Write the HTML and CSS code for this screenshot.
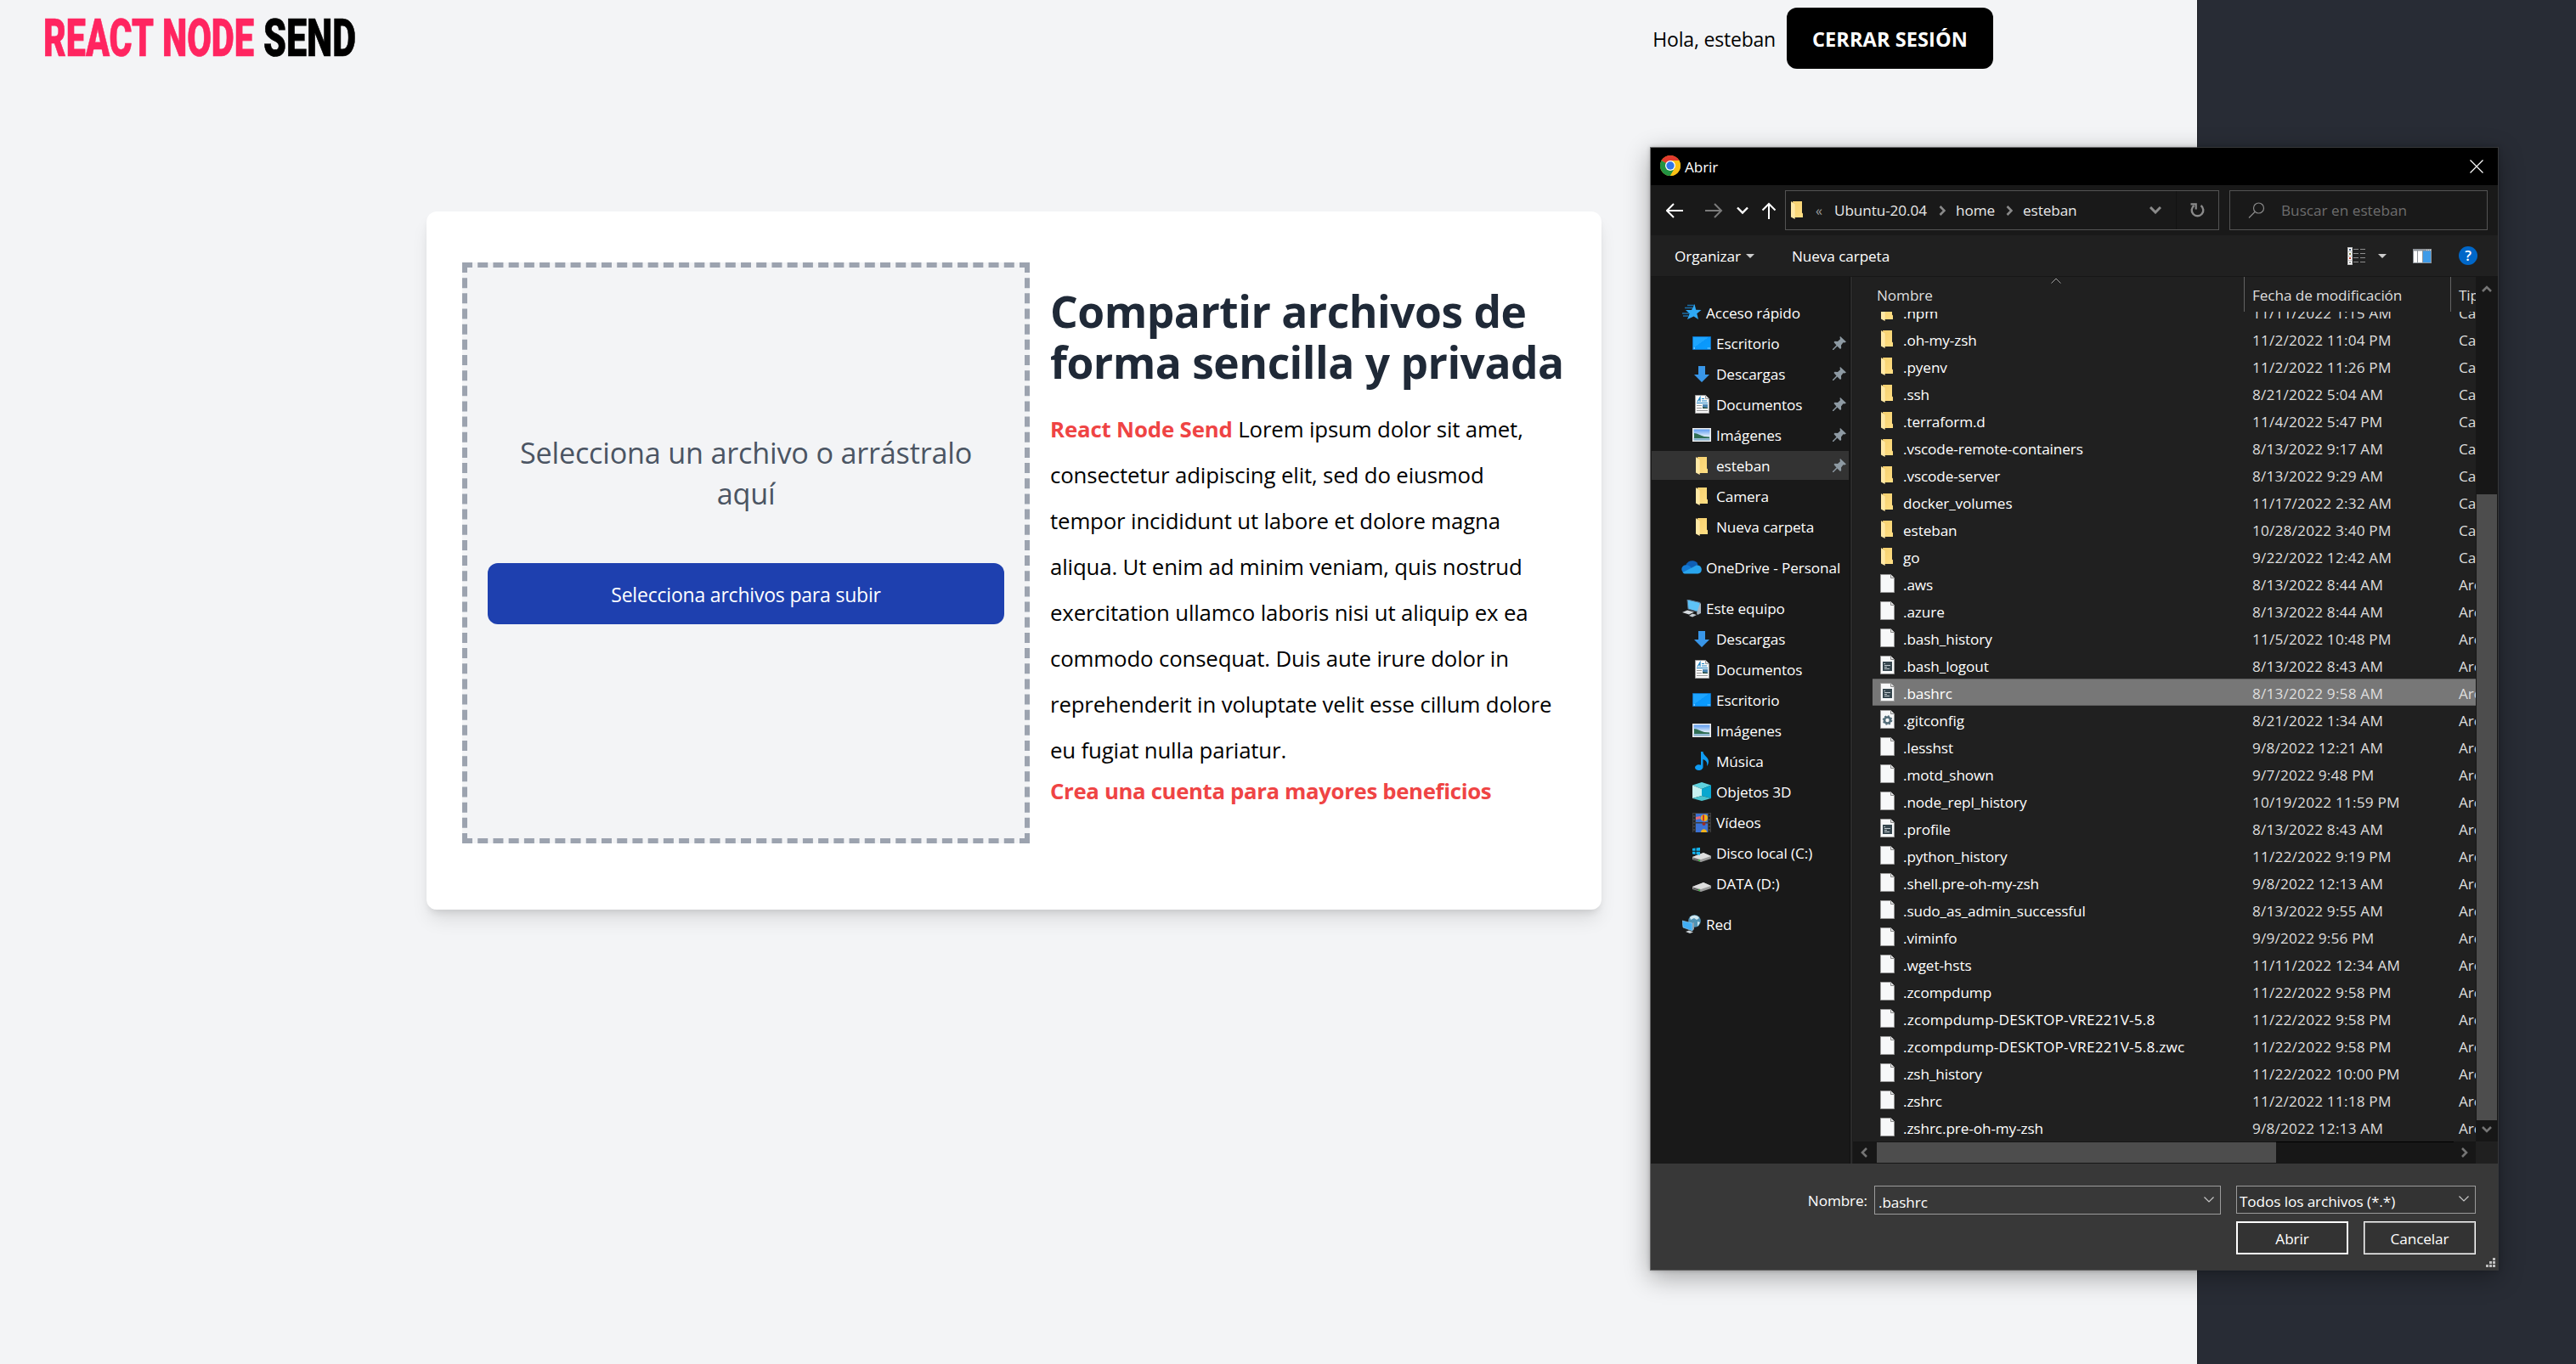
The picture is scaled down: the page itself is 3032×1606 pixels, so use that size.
FILE: index.html
```html
<!DOCTYPE html>
<html lang="es">
<head>
<meta charset="utf-8">
<title>React Node Send</title>
<link rel="stylesheet" href="styles.css">
</head>
<body>
<svg class="defs" aria-hidden="true">
  <defs>
    <linearGradient id="gFolder" x1="0" y1="0" x2="1" y2="1"><stop offset="0" stop-color="#f5cf6d"/><stop offset="1" stop-color="#ffdf85"/></linearGradient>
    <linearGradient id="gDesk" x1="0" y1="0" x2="1" y2="1"><stop offset="0.45" stop-color="#1ea5ff"/><stop offset="0.46" stop-color="#0a97fb"/><stop offset="1" stop-color="#0a9dff"/></linearGradient>
    <linearGradient id="gSky" x1="0" y1="0" x2="0" y2="1"><stop offset="0" stop-color="#4f93ee"/><stop offset="0.6" stop-color="#dbeafa"/><stop offset="1" stop-color="#5d95b8"/></linearGradient>
  </defs>
  <symbol id="folder" viewBox="0 0 14 21"><path d="M2 0h11v13.5l1 1V19H4z" fill="url(#gFolder)"/><path d="M0 0l4.7 3.4V21L0 18.5z" fill="#ffe9a6"/></symbol>
  <symbol id="file" viewBox="0 0 17 22"><path d="M.5.5h12l4 4v17H.5z" fill="#f7f8f9" stroke="#9a9a9a"/><path d="M12.5.5v4h4" fill="#e4e4e4" stroke="#8a8a8a"/></symbol>
  <symbol id="script" viewBox="0 0 17 22"><use href="#file"/><path d="M3 7h11v11H3z" fill="#37474f"/><path d="M4.500 9.500h1.500M5 11.500h7M5 13.500h3M5 15.500h6" stroke="#c3cbd0"/></symbol>
  <symbol id="config" viewBox="0 0 17 22"><use href="#file"/><circle cx="8.500" cy="12" r="3.500" fill="none" stroke="#546e7a" stroke-width="2.600"/><circle cx="8.500" cy="12" r="5" fill="none" stroke="#546e7a" stroke-width="1.600" stroke-dasharray="1.960 1.960"/></symbol>
  <symbol id="star" viewBox="0 0 24 24"><path d="M15.500 2l1.700 6.800 6.300.2-5.200 4.300 1.700 6.700-5.400-3.500L7 20l2.600-6.700L5 9h7z" fill="#2fa9f5"/><path d="M7 3.500h8M4 6.500h9M1 13h8M2 16h6" stroke="#1b6da6" stroke-width="1.300"/></symbol>
  <symbol id="desktop" viewBox="0 0 22 16"><path d="M.5.5h21v15H.5z" fill="url(#gDesk)" stroke="#0e6fbd"/><path d="M1.500 14h1.500M18 14h1M20 14h1" stroke="#e9f5ff"/></symbol>
  <symbol id="download" viewBox="0 0 18 19"><path d="M5 0h8v10h5l-9 9-9-9h5z" fill="#3996e8"/></symbol>
  <symbol id="document" viewBox="0 0 17 22"><path d="M.5.500h12l4 4v17H.5z" fill="#fafafa" stroke="#9a9a9a"/><path d="M12.500.5v4h4" fill="#ddd" stroke="#999"/><path d="M3 8l3-5v5M8 4.500h3M8 7h6M2 9.500h13" stroke="#1c84c6" stroke-width="1.200" fill="none"/><path d="M2 12.500h6M2 15.500h6M2 18.500h13" stroke="#9a9a9a"/><path d="M9 11h6v5H9z" fill="#4b86b4"/><path d="M9 14l6 1v1H9z" fill="#2e5346"/></symbol>
  <symbol id="picture" viewBox="0 0 22 16"><path d="M.75.75h20.500v14.500H.75z" fill="url(#gSky)" stroke="#efefef" stroke-width="1.500"/><path d="M2 6c4 0 8 3 12 4l6 .500V12H2z" fill="#2f6e53"/></symbol>
  <symbol id="cloud" viewBox="0 0 24 16"><path d="M5 5.500C7 1 11-.5 15 .5c3 .8 4 2.500 4.500 4.700L12 9z" fill="#0f5fb5"/><path d="M2 14C-1 11 0 6 5 5.300c3-.5 5 1 7 3.200L8 14z" fill="#1379d3"/><path d="M15 7c3-3 8-1.500 8.600 2.300C24.500 13 22 15.500 19.500 15.500H5c-2 0-3-.7-3.500-1.500z" fill="#29a5ee"/></symbol>
  <symbol id="computer" viewBox="0 0 24 21"><path d="M7 0l15 3.500V15L8 11z" fill="#5ec3f7" stroke="#5b7790"/><path d="M22 4l1 1v11l-4 2-1-2z" fill="#a9b6c2"/><path d="M1 15l6-2.500 8 2-6 3z" fill="#d5dade"/><path d="M9 19l4-2.500 5 1.500-5 2.500z" fill="#c3cad0"/></symbol>
  <symbol id="music" viewBox="0 0 17 23"><path d="M7 0h2.500c0 4 6 6 6.500 11 .2 2-.6 4.500-2 6 1-5-1.500-7-4.500-8v9c0 2.500-2.500 4-5 4S0 20.600 0 18.800s2-3.600 4.500-3.600c1 0 1.900.2 2.500.6z" fill="#0f9cf3"/></symbol>
  <symbol id="cube" viewBox="0 0 22 22"><path d="M0 3.500L11 0l11 3.500L11 8z" fill="#5fd3df"/><path d="M0 3.500L11 8v8L0 19z" fill="#c8f1f0"/><path d="M22 3.500L11 8v8l11 3z" fill="#0aa7cf"/><path d="M0 19l11-3 11 3-11 3z" fill="#49c3cf"/></symbol>
  <symbol id="video" viewBox="0 0 22 23"><path d="M0 0h22v23H0z" fill="#3d3d3d"/><path d="M2 1v22M20 1v22" stroke="#1c1c1c" stroke-width="1.600" stroke-dasharray="2 2"/><path d="M4 1h14v10H4zM4 12.500h14V23H4z" fill="#3c72d4"/><circle cx="14" cy="6" r="4" fill="#f0b21c"/><path d="M12 2.500h2v7h-2z" fill="#c9342c"/><path d="M4 5l5-1 1 3-6 1z" fill="#e46b77"/><circle cx="13.500" cy="13" r="2" fill="#9c2c26"/><path d="M10 23c0-5 7-5 7 0z" fill="#f0b21c"/></symbol>
  <symbol id="disk" viewBox="0 0 22 12"><path d="M0 6l13-5 9 4v3l-12 4-10-3z" fill="#9c9c9c"/><path d="M0 6l13-5 9 4-12 4z" fill="#dedede"/><path d="M1 8l8 2.500" stroke="#444" stroke-width="1.300"/><path d="M7 10h2" stroke="#38c638" stroke-width="1.500"/></symbol>
  <symbol id="sysdisk" viewBox="0 0 22 17"><use href="#disk" y="5" width="22" height="12"/><path d="M0 1l3.500-.5v3.300H0zM4.500.4L9-.2v4H4.500zM0 4.800h3.500V8L0 7.500zM4.500 4.800H9v4L4.500 8z" fill="#12b3ee"/></symbol>
  <symbol id="network" viewBox="0 0 22 22"><circle cx="14.500" cy="7.500" r="7.300" fill="#4f93b5"/><path d="M9 3c3-3 9-3 11 1l-3 2-3-2-4 2zM18 8l3 1-3 5z" fill="#cfe7f0"/><path d="M0 7l12 3v9L1 15z" fill="#41aef3" stroke="#9fd3f2" stroke-width=".6"/><path d="M12 10l2-1v8l-2 2z" fill="#8ea2b0"/><path d="M4 20l4-1.500 5 2-4 1.500z" fill="#cbd2d6"/></symbol>
  <symbol id="pin" viewBox="0 0 16 16"><path d="M9 0l7 6.500-2 1-1.500-.2L10 10.500l.2 3.500-1.200 1L5.500 11.500 1 16H0v-1l4.500-4.500L1.500 7l1-1.200 3.500.2L9 3.300 8.500 1z" fill="#8e9aa3"/></symbol>
</svg>

<div class="screen">
  <main class="page">
    <header class="topbar">
      <svg class="logo" width="368" height="50" viewBox="0 0 368 50" role="img">
        <text class="logo-accent" x="-1" y="47" textLength="130" lengthAdjust="spacingAndGlyphs">REACT</text>
        <text class="logo-accent" x="139" y="47" textLength="108" lengthAdjust="spacingAndGlyphs">NODE</text>
        <text class="logo-dark" x="258" y="47" textLength="109" lengthAdjust="spacingAndGlyphs">SEND</text>
      </svg>
      <div class="session">
        <span class="hello">Hola, esteban</span>
        <button class="logout">CERRAR SESIÓN</button>
      </div>
    </header>
    <section class="card">
      <div class="dropzone">
        <p class="drop-text">Selecciona un archivo o arrástralo<br>aquí</p>
        <button class="upload">Selecciona archivos para subir</button>
      </div>
      <div class="info">
        <h1>Compartir archivos de<br>forma sencilla y privada</h1>
        <p class="lead"><b>React Node Send</b> Lorem ipsum dolor sit amet,<br>consectetur adipiscing elit, sed do eiusmod<br>tempor incididunt ut labore et dolore magna<br>aliqua. Ut enim ad minim veniam, quis nostrud<br>exercitation ullamco laboris nisi ut aliquip ex ea<br>commodo consequat. Duis aute irure dolor in<br>reprehenderit in voluptate velit esse cillum dolore<br>eu fugiat nulla pariatur.</p>
        <a class="signup">Crea una cuenta para mayores beneficios</a>
      </div>
    </section>
  </main>

  <div class="dialog" role="dialog">
    <div class="titlebar">
      <svg class="chrome" width="24" height="24" viewBox="0 0 24 24"><circle cx="12" cy="12" r="12" fill="#fbc116"/><path d="M12 12L1.600 6A12 12 0 0 1 22.400 6z" fill="#e33b2e"/><path d="M12 12L1.600 6A12 12 0 0 0 12 24l5.200-9z" fill="#229342"/><path d="M12 6h10.400A12 12 0 0 1 12 24l5.200-9z" fill="#fbc116"/><circle cx="12" cy="12" r="6" fill="#fff"/><circle cx="12" cy="12" r="4.700" fill="#2f74e8"/></svg>
      <span class="title">Abrir</span>
      <svg class="close" width="16" height="16" viewBox="0 0 16 16"><path d="M.5.500l15 15M15.500.5l-15 15" stroke="#fff" stroke-width="1.200"/></svg>
    </div>

    <div class="navbar">
      <svg class="arrows" width="131" height="20" viewBox="0 0 131 20" fill="none" stroke="#fff" stroke-width="2"><path d="M1 10h19M9 2l-8 8 8 8"/><path d="M46 10h19M57 2l8 8-8 8" stroke="#7b7b7b"/><path d="M84 6.500l6 6 6-6" stroke-width="2.400"/><path d="M121 20V2M113.500 9.500L121 2l7.500 7.500"/></svg>
      <div class="address">
        <svg class="addr-folder" width="14" height="21"><use href="#folder"/></svg>
        <span class="laquo">«</span>
        <span class="crumb c1">Ubuntu-20.04</span>
        <svg class="sep" width="8" height="12" viewBox="0 0 8 12"><path d="M1.500 1l5 5-5 5" fill="none" stroke="#8a8a8a" stroke-width="2.600"/></svg>
        <span class="crumb c2">home</span>
        <svg class="sep" width="8" height="12" viewBox="0 0 8 12"><path d="M1.500 1l5 5-5 5" fill="none" stroke="#8a8a8a" stroke-width="2.600"/></svg>
        <span class="crumb c3">esteban</span>
        <svg class="addr-down" width="14" height="9" viewBox="0 0 14 9"><path d="M1 1l6 6 6-6" fill="none" stroke="#8a8a8a" stroke-width="3"/></svg>
        <div class="refresh"><svg width="17" height="17" viewBox="0 0 17 17"><path d="M4.500 3A6.800 6.800 0 1 0 12.500 3" fill="none" stroke="#8a8a8a" stroke-width="2.400"/><path d="M.5 1.300h6.200v6.200" fill="none" stroke="#8a8a8a" stroke-width="2.200"/></svg></div>
      </div>
      <div class="search">
        <svg width="20" height="20" viewBox="0 0 20 20"><circle cx="12.500" cy="7" r="6" fill="none" stroke="#8a8a8a" stroke-width="1.200"/><path d="M8 11.500L1 18.500" stroke="#8a8a8a" stroke-width="1.300"/></svg>
        <span>Buscar en esteban</span>
      </div>
    </div>

    <div class="toolbar">
      <span class="organize">Organizar</span>
      <i class="tri"></i>
      <span class="newfolder">Nueva carpeta</span>
      <svg class="views" width="22" height="21" viewBox="0 0 22 21"><path d="M0 0h6v21H0z" fill="#bdbdbd"/><path d="M1 1h4v4H1zM1 6h4v4H1zM1 11h4v4H1zM1 16h4v4H1z" fill="#fff"/><path d="M2 2h2v2H2z" fill="#3c5a78"/><path d="M2 7h2v2H2z" fill="#7a7a3c"/><path d="M2 12h2v2H2z" fill="#c23a2a"/><path d="M2 17h2v2H2z" fill="#999"/><path d="M7 2.500h6M15 2.500h6M7 7.500h6M15 7.500h6M7 12.500h6M15 12.500h6M7 17.500h6M15 17.500h6" stroke="#8d8d8d"/></svg>
      <i class="tri tri2"></i>
      <svg class="preview" width="22" height="17" viewBox="0 0 22 17"><path d="M0 0h22v17H0z" fill="#8f959b"/><path d="M1 2.500h4v13.500H1zM6 2.500h5v13.500H6z" fill="#fff"/><path d="M12 2.500h9v13.500h-9z" fill="#3f9be8"/><path d="M16 1.500h5" stroke="#ddd" stroke-dasharray="1 1"/></svg>
      <span class="help">?</span>
    </div>

    <div class="body">
      <nav class="tree">
        <div class="node top"><span class="ic"><svg width="24" height="24"><use href="#star"/></svg></span>Acceso rápido</div>
        <div class="node"><span class="ic"><svg width="22" height="16"><use href="#desktop"/></svg></span>Escritorio<svg class="pin" width="16" height="16"><use href="#pin"/></svg></div>
        <div class="node"><span class="ic"><svg width="18" height="19"><use href="#download"/></svg></span>Descargas<svg class="pin" width="16" height="16"><use href="#pin"/></svg></div>
        <div class="node"><span class="ic"><svg width="17" height="22"><use href="#document"/></svg></span>Documentos<svg class="pin" width="16" height="16"><use href="#pin"/></svg></div>
        <div class="node"><span class="ic"><svg width="22" height="16"><use href="#picture"/></svg></span>Imágenes<svg class="pin" width="16" height="16"><use href="#pin"/></svg></div>
        <div class="node current"><span class="ic"><svg width="14" height="21"><use href="#folder"/></svg></span>esteban<svg class="pin" width="16" height="16"><use href="#pin"/></svg></div>
        <div class="node"><span class="ic"><svg width="14" height="21"><use href="#folder"/></svg></span>Camera</div>
        <div class="node"><span class="ic"><svg width="14" height="21"><use href="#folder"/></svg></span>Nueva carpeta</div>
        <div class="node top gap"><span class="ic"><svg width="24" height="16"><use href="#cloud"/></svg></span>OneDrive - Personal</div>
        <div class="node top gap"><span class="ic"><svg width="24" height="21"><use href="#computer"/></svg></span>Este equipo</div>
        <div class="node"><span class="ic"><svg width="18" height="19"><use href="#download"/></svg></span>Descargas</div>
        <div class="node"><span class="ic"><svg width="17" height="22"><use href="#document"/></svg></span>Documentos</div>
        <div class="node"><span class="ic"><svg width="22" height="16"><use href="#desktop"/></svg></span>Escritorio</div>
        <div class="node"><span class="ic"><svg width="22" height="16"><use href="#picture"/></svg></span>Imágenes</div>
        <div class="node"><span class="ic"><svg width="17" height="23"><use href="#music"/></svg></span>Música</div>
        <div class="node"><span class="ic"><svg width="22" height="22"><use href="#cube"/></svg></span>Objetos 3D</div>
        <div class="node"><span class="ic"><svg width="22" height="23"><use href="#video"/></svg></span>Vídeos</div>
        <div class="node"><span class="ic low"><svg width="22" height="17"><use href="#sysdisk"/></svg></span>Disco local (C:)</div>
        <div class="node"><span class="ic low2"><svg width="22" height="12"><use href="#disk"/></svg></span>DATA (D:)</div>
        <div class="node top gap"><span class="ic"><svg width="22" height="22"><use href="#network"/></svg></span>Red</div>
      </nav>
      <div class="divider"></div>
      <div class="list">
        <div class="pane">
          <div class="heads">
            <span class="h-name">Nombre</span><span class="h-date">Fecha de modificación</span><span class="h-type">Tipo</span>
            <svg class="sort" width="12" height="7" viewBox="0 0 12 7"><path d="M.5 6.500L6 1l5.500 5.500" fill="none" stroke="#a0a0a0"/></svg>
          </div>
          <div class="rows">
            <div class="row dir"><svg><use href="#folder"/></svg><span>.npm</span><span>11/11/2022 1:15 AM</span><span>Carpeta</span></div>
            <div class="row dir"><svg><use href="#folder"/></svg><span>.oh-my-zsh</span><span>11/2/2022 11:04 PM</span><span>Carpeta</span></div>
            <div class="row dir"><svg><use href="#folder"/></svg><span>.pyenv</span><span>11/2/2022 11:26 PM</span><span>Carpeta</span></div>
            <div class="row dir"><svg><use href="#folder"/></svg><span>.ssh</span><span>8/21/2022 5:04 AM</span><span>Carpeta</span></div>
            <div class="row dir"><svg><use href="#folder"/></svg><span>.terraform.d</span><span>11/4/2022 5:47 PM</span><span>Carpeta</span></div>
            <div class="row dir"><svg><use href="#folder"/></svg><span>.vscode-remote-containers</span><span>8/13/2022 9:17 AM</span><span>Carpeta</span></div>
            <div class="row dir"><svg><use href="#folder"/></svg><span>.vscode-server</span><span>8/13/2022 9:29 AM</span><span>Carpeta</span></div>
            <div class="row dir"><svg><use href="#folder"/></svg><span>docker_volumes</span><span>11/17/2022 2:32 AM</span><span>Carpeta</span></div>
            <div class="row dir"><svg><use href="#folder"/></svg><span>esteban</span><span>10/28/2022 3:40 PM</span><span>Carpeta</span></div>
            <div class="row dir"><svg><use href="#folder"/></svg><span>go</span><span>9/22/2022 12:42 AM</span><span>Carpeta</span></div>
            <div class="row"><svg><use href="#file"/></svg><span>.aws</span><span>8/13/2022 8:44 AM</span><span>Archivo</span></div>
            <div class="row"><svg><use href="#file"/></svg><span>.azure</span><span>8/13/2022 8:44 AM</span><span>Archivo</span></div>
            <div class="row"><svg><use href="#file"/></svg><span>.bash_history</span><span>11/5/2022 10:48 PM</span><span>Archivo</span></div>
            <div class="row"><svg><use href="#script"/></svg><span>.bash_logout</span><span>8/13/2022 8:43 AM</span><span>Archivo</span></div>
            <div class="row selected"><svg><use href="#script"/></svg><span>.bashrc</span><span>8/13/2022 9:58 AM</span><span>Archivo</span></div>
            <div class="row"><svg><use href="#config"/></svg><span>.gitconfig</span><span>8/21/2022 1:34 AM</span><span>Archivo</span></div>
            <div class="row"><svg><use href="#file"/></svg><span>.lesshst</span><span>9/8/2022 12:21 AM</span><span>Archivo</span></div>
            <div class="row"><svg><use href="#file"/></svg><span>.motd_shown</span><span>9/7/2022 9:48 PM</span><span>Archivo</span></div>
            <div class="row"><svg><use href="#file"/></svg><span>.node_repl_history</span><span>10/19/2022 11:59 PM</span><span>Archivo</span></div>
            <div class="row"><svg><use href="#script"/></svg><span>.profile</span><span>8/13/2022 8:43 AM</span><span>Archivo</span></div>
            <div class="row"><svg><use href="#file"/></svg><span>.python_history</span><span>11/22/2022 9:19 PM</span><span>Archivo</span></div>
            <div class="row"><svg><use href="#file"/></svg><span>.shell.pre-oh-my-zsh</span><span>9/8/2022 12:13 AM</span><span>Archivo</span></div>
            <div class="row"><svg><use href="#file"/></svg><span>.sudo_as_admin_successful</span><span>8/13/2022 9:55 AM</span><span>Archivo</span></div>
            <div class="row"><svg><use href="#file"/></svg><span>.viminfo</span><span>9/9/2022 9:56 PM</span><span>Archivo</span></div>
            <div class="row"><svg><use href="#file"/></svg><span>.wget-hsts</span><span>11/11/2022 12:34 AM</span><span>Archivo</span></div>
            <div class="row"><svg><use href="#file"/></svg><span>.zcompdump</span><span>11/22/2022 9:58 PM</span><span>Archivo</span></div>
            <div class="row caps"><svg><use href="#file"/></svg><span>.zcompdump-DESKTOP-VRE221V-5.8</span><span>11/22/2022 9:58 PM</span><span>Archivo</span></div>
            <div class="row caps"><svg><use href="#file"/></svg><span>.zcompdump-DESKTOP-VRE221V-5.8.zwc</span><span>11/22/2022 9:58 PM</span><span>Archivo</span></div>
            <div class="row"><svg><use href="#file"/></svg><span>.zsh_history</span><span>11/22/2022 10:00 PM</span><span>Archivo</span></div>
            <div class="row"><svg><use href="#file"/></svg><span>.zshrc</span><span>11/2/2022 11:18 PM</span><span>Archivo</span></div>
            <div class="row"><svg><use href="#file"/></svg><span>.zshrc.pre-oh-my-zsh</span><span>9/8/2022 12:13 AM</span><span>Archivo</span></div>
          </div>
        </div>
        <div class="vscroll">
          <svg width="12" height="9" viewBox="0 0 12 9"><path d="M1 8l5-5 5 5" fill="none" stroke="#757575" stroke-width="2.600"/></svg>
          <div class="vthumb"></div>
          <svg width="12" height="9" viewBox="0 0 12 9"><path d="M1 1l5 5 5-5" fill="none" stroke="#757575" stroke-width="2.600"/></svg>
        </div>
        <div class="hscroll">
          <svg width="9" height="12" viewBox="0 0 9 12"><path d="M8 1L3 6l5 5" fill="none" stroke="#757575" stroke-width="2.600"/></svg>
          <div class="hthumb"></div>
          <div class="htrack"></div>
          <svg width="9" height="12" viewBox="0 0 9 12"><path d="M1 1l5 5-5 5" fill="none" stroke="#757575" stroke-width="2.600"/></svg>
        </div>
      </div>
    </div>

    <div class="footer">
      <label>Nombre:</label>
      <div class="combo input"><span>.bashrc</span><svg width="12" height="7" viewBox="0 0 12 7"><path d="M.5.500L6 6l5.500-5.500" fill="none" stroke="#c8c8c8" stroke-width="1.200"/></svg></div>
      <div class="combo filter"><span>Todos los archivos (*.*)</span><svg width="12" height="7" viewBox="0 0 12 7"><path d="M.5.500L6 6l5.500-5.500" fill="none" stroke="#c8c8c8" stroke-width="1.200"/></svg></div>
      <button class="btn primary">Abrir</button>
      <button class="btn">Cancelar</button>
    </div>
    <svg class="grip" width="11" height="11" viewBox="0 0 11 11"><path d="M8 0h3v3H8zM8 4h3v3H8zM8 8h3v3H8zM4 4h3v3H4zM4 8h3v3H4zM0 8h3v3H0z" fill="#bfbfbf"/></svg>
  </div>
</div>
</body>
</html>
```

FILE: styles.css
```css
* { box-sizing: border-box; }
body { margin: 0; font-family: "Open Sans", "Noto Sans", sans-serif; }
button { font: inherit; letter-spacing: inherit; margin: 0; padding: 0; border: 0; white-space: nowrap; }
h1, p { margin: 0; }
svg { display: block; flex: none; }
.defs { position: absolute; width: 0; height: 0; }

.screen { position: relative; width: 3032px; height: 1606px; overflow: hidden; background: #282c35; }
.page { width: 2587px; height: 1606px; background: #f3f4f6; border-right: 1px solid #1b1e24; }

/* Page header */
.topbar { display: flex; justify-content: space-between; align-items: center; height: 90px; padding: 0 240px 0 52px; }
.logo { margin-top: -2px; overflow: visible; }
.logo text { font-family: Roboto, "Open Sans", sans-serif; font-weight: 900; font-size: 61px; stroke-width: .7px; }
.logo-accent { fill: #ff2560; stroke: #ff2560; }
.logo-dark { fill: #000; stroke: #000; }
.session { display: flex; align-items: center; gap: 13px; font-size: 23px; letter-spacing: -0.2px; }
.hello { padding-top: 2px; }
.logout { width: 243px; height: 72px; border-radius: 12px; background: #000; color: #fff; font-weight: 700; font-size: 23.500px; letter-spacing: 0.1px; padding-top: 2px; }

/* Upload card */
.card { display: flex; gap: 24px; width: 1383px; height: 822px; margin: 159px 0 0 502px; padding: 60px 42px; background: #fff; border-radius: 12px; box-shadow: 0 15px 22px -4px rgba(0,0,0,.1), 0 6px 9px -3px rgba(0,0,0,.1); }
.dropzone { display: flex; flex-direction: column; width: 668px; height: 684px; padding: 0 24px; border: 6px dashed #9ca3af; background: #f3f4f6; text-align: center; }
.drop-text { margin-top: 194px; font-size: 34.2px; line-height: 48px; color: #4b5563; letter-spacing: -0.2px; }
.upload { height: 72px; margin-top: 58px; border-radius: 12px; background: #1e40af; color: #fff; font-size: 23px; letter-spacing: -0.2px; padding-top: 2px; }
.info { padding-top: 27px; white-space: nowrap; }
.info h1 { font-size: 51.500px; line-height: 60px; font-weight: 700; color: #1f2937; letter-spacing: -0.5px; }
.lead { margin-top: 22px; font-size: 25.800px; line-height: 54px; color: #000; letter-spacing: -0.15px; }
.lead b, .signup { color: #ef4444; font-weight: 700; }
.signup { display: block; font-size: 25.800px; line-height: 42px; letter-spacing: -0.36px; }

/* File dialog window */
.dialog { position: absolute; left: 1942px; top: 173px; width: 999px; height: 1323px; display: flex; flex-direction: column; border: 1px solid rgba(66,66,66,.685); background: #202020; background-clip: padding-box; color: #fff; font-size: 17.200px; letter-spacing: -0.1px; box-shadow: 0 8px 28px rgba(0,0,0,.32), 0 0 5px rgba(0,0,0,.2); white-space: nowrap; }
.titlebar { display: flex; align-items: center; height: 44px; flex: none; background: #000; padding: 0 17px 0 11px; }
.chrome { margin-top: -2px; }
.title { margin-left: 5px; }
.close { margin-left: auto; }

.navbar { display: flex; align-items: center; height: 59px; flex: none; background: #191919; padding: 0 12px 0 18px; }
.arrows { width: 131px; margin-right: 9px; }
.address { display: flex; align-items: center; width: 511px; height: 47px; margin-right: 12px; border: 1px solid #535353; padding-left: 6px; }
.laquo { width: 37px; padding-left: 15px; color: #9b9b9b; font-size: 16px; }
.crumb { color: #e8e8e8; }
.c1 { width: 123px; }
.c2 { width: 59px; margin-left: 12px; }
.c3 { width: 149px; margin-left: 12px; }
.refresh { display: flex; align-items: center; justify-content: center; width: 50px; height: 45px; margin-left: 17px; border-left: 1px solid #121212; }
.search { display: flex; align-items: center; width: 304px; height: 47px; border: 1px solid #535353; padding-left: 21px; color: #6d6d6d; }
.search span { margin-left: 19px; letter-spacing: 0; }

.toolbar { display: flex; align-items: center; height: 49px; flex: none; border-bottom: 1px solid #171717; padding-left: 28px; }
.organize { width: 84px; }
.tri { width: 0; height: 0; border: 5px solid transparent; border-top-color: #ccc; border-bottom: 0; }
.newfolder { width: 698px; padding-left: 44px; }
.tri2 { margin-left: 14px; }
.preview { margin-left: 31px; }
.help { width: 22px; height: 22px; margin-left: 32px; border-radius: 50%; background: #0067c8; text-align: center; line-height: 21px; font-size: 17px; font-weight: 600; }

.body { display: flex; flex: none; height: 1044px; }
.tree { width: 234px; padding: 24px 0 0 1px; background: #191919; }
.node { display: flex; align-items: center; height: 36px; padding-left: 47px; }
.node.top { padding-left: 35px; }
.node.gap { margin-top: 12px; }
.node .ic { display: flex; justify-content: center; width: 24px; margin-right: 5px; }
.ic.low { padding-top: 4px; }
.ic.low2 { padding-top: 8px; }
.pin { margin: 0 4px 0 auto; }
.current { background: linear-gradient(#333, #333) no-repeat 0 1px / 232px 34px; }
.divider { width: 4px; background: #2b2b2b; border-left: 1px solid #111; border-right: 1px solid #1c1c1c; }

.list { display: grid; grid-template-columns: 733px 26px; grid-template-rows: 1018px 26px; }
.pane { position: relative; overflow: hidden; }
.heads { position: relative; display: flex; height: 41px; line-height: 43px; color: #dedede; }
.heads span { flex: none; }
.h-name { width: 461px; padding-left: 28px; border-right: 1px solid #636363; }
.h-date { width: 243px; padding-left: 9px; border-right: 1px solid #636363; }
.h-type { padding-left: 9px; }
.sort { position: absolute; left: 233px; top: 1px; }
.rows { height: 977px; overflow: hidden; display: flex; flex-direction: column; justify-content: flex-end; padding-bottom: 1px; }
.row { display: grid; grid-template-columns: 27px 411px 243px 20px; flex: none; height: 32px; line-height: 35px; margin-left: 23px; padding-left: 9px; }
.row svg { width: 17px; height: 22px; margin-top: 5px; }
.row.dir svg { width: 14px; height: 21px; margin: 6px 0 0 1px; }
.row span:nth-of-type(n+2) { color: #dedede; }
.row span:nth-of-type(2) { letter-spacing: 0.2px; }
.caps span:nth-of-type(1) { letter-spacing: 0.18px; }
.selected { background: #777; box-shadow: inset 0 1px #5e5e5e, inset 0 -1px #5e5e5e; }
.vscroll { display: flex; flex-direction: column; align-items: center; justify-content: space-between; padding: 9px 0 9px; background: #171717; }
.vthumb { width: 24px; height: 737px; margin-top: 231px; background: #4d4d4d; }
.hscroll { display: flex; align-items: center; background: #171717; padding-left: 8px; }
.hthumb { width: 470px; height: 24px; margin-left: 11px; background: #4d4d4d; }
.htrack { width: 209px; height: 26px; border-top: 1px solid #000; margin-right: 9px; }

/* Dialog footer */
.footer { flex: 1; display: grid; grid-template-columns: 263px 408px 18px 132px 18px 132px; grid-template-rows: 34px 39px; row-gap: 8px; padding-top: 26px; background: #383838; }
.footer label { text-align: right; padding-right: 8px; line-height: 36px; }
.combo { display: flex; align-items: center; justify-content: space-between; border: 1px solid #9b9b9b; padding: 0 7px 0 4px; }
.combo svg { margin-top: -2px; }
.input span { padding-top: 4px; }
.filter { grid-column: 4 / 7; height: 33px; padding-left: 3px; background: #333; }
.filter span { padding-top: 3px; }
.btn { grid-column: 6; height: 39px; background: #333; color: #fff; border: 1px solid #fff; box-shadow: inset 0 0 0 1px #999; padding-top: 1px; }
.btn.primary { grid-column: 4; border-width: 2px; box-shadow: none; }
.grip { position: absolute; right: 3px; bottom: 3px; }
```
